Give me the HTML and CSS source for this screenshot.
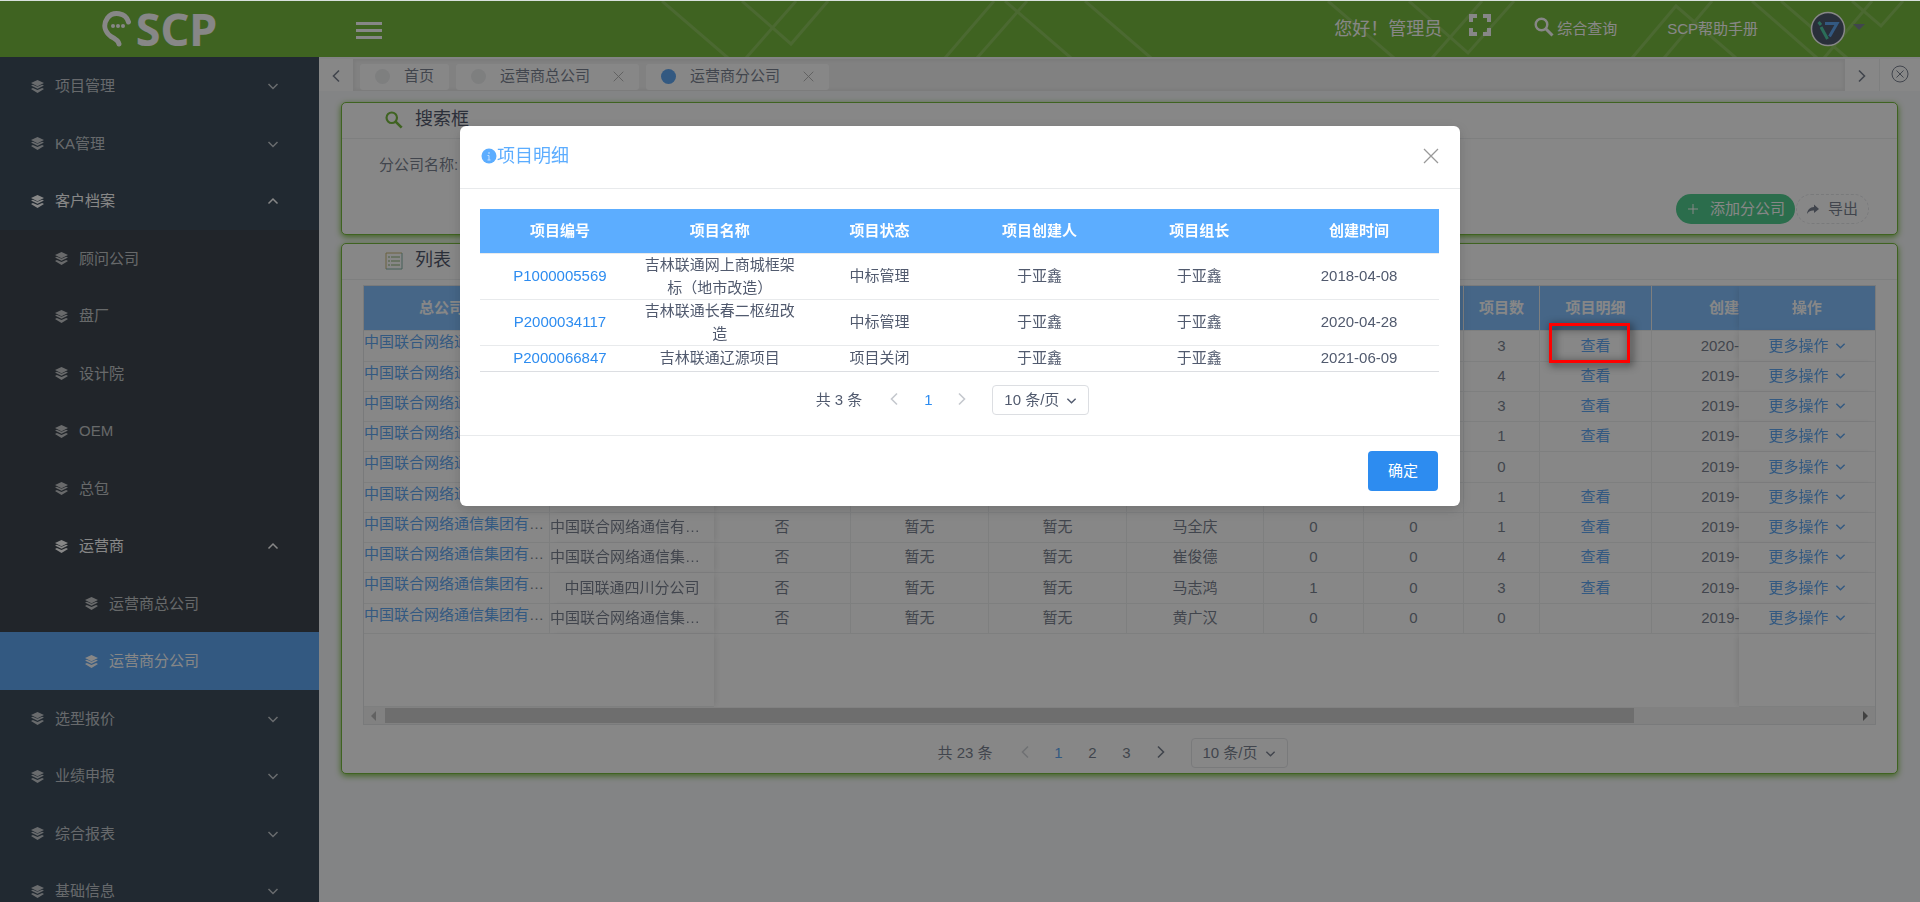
FILE: index.html
```
<!DOCTYPE html>
<html lang="zh-CN">
<head>
    <meta charset="UTF-8">
    <meta name="viewport" content="width=device-width, initial-scale=1.0">
    <title>SCP - 运营商分公司</title>
    <link rel="stylesheet" href="styles.css">
</head>
<body>
    <svg class="sprite" aria-hidden="true">
        <symbol id="i-layers" viewBox="1 1 14 14">
            <path fill="currentColor" d="M8 1l7 3.2L8 7.6 1 4.2z"/>
            <path fill="currentColor" d="M1 7l2-1 5 2.3L13 6l2 1-7 3.4z"/>
            <path fill="currentColor" d="M1 10.6l2-1 5 2.3 5-2.3 2 1L8 15z"/>
        </symbol>
        <symbol id="i-down" viewBox="0 0 12 12">
            <path fill="none" stroke="currentColor" stroke-width="1.5" d="M1.5 4L6 8.5 10.5 4"/>
        </symbol>
        <symbol id="i-up" viewBox="0 0 12 12">
            <path fill="none" stroke="currentColor" stroke-width="1.5" d="M1.5 8.5L6 4l4.500 4.500"/>
        </symbol>
        <symbol id="i-left" viewBox="0 0 12 16">
            <path fill="none" stroke="currentColor" stroke-width="1.6" d="M9 2.500L3.500 8 9 13.500"/>
        </symbol>
        <symbol id="i-right" viewBox="0 0 12 16">
            <path fill="none" stroke="currentColor" stroke-width="1.6" d="M3 2.500L8.500 8 3 13.500"/>
        </symbol>
        <symbol id="i-close" viewBox="0 0 16 16">
            <path fill="none" stroke="currentColor" stroke-width="1.300" d="M1 1l14 14M15 1L1 15"/>
        </symbol>
        <symbol id="i-search" viewBox="0 0 20 20">
            <circle cx="7.500" cy="7.500" r="5.800" fill="none" stroke="currentColor" stroke-width="2.400"/>
            <path stroke="currentColor" stroke-width="3" d="M11.500 11.500L18.500 18.500"/>
        </symbol>
    </svg>

    <div class="app">
        <header class="header">
            <svg class="header-lines" viewBox="0 0 1920 56" preserveAspectRatio="xMaxYMin slice" aria-hidden="true">
                <path d="M662 0L728 57M742 0L791 43L828 0M796 0L746 57M994 0L945 57M1027 0L977 57M1005 0L1071 57M1085 0L1151 57M1328 0L1394 57M1409 0L1468 52L1514 0M1482 0L1432 57M1632 57L1676 5L1736 57M1712 0L1664 57M1752 0L1817 57M1781 0L1847 57M1852 0L1881 25L1903 0M1872 0L1824 57"/>
            </svg>
            <a class="logo" href="#">
                <svg width="30" height="36" viewBox="0 0 30 36" aria-hidden="true">
                    <path d="M26.500 11C24 1.500 11 0 5.500 7C.5 14 3 21 9 25.500C14 28 16.500 30 17 33" fill="none" stroke="#fff" stroke-width="5" stroke-linecap="round"/>
                    <circle cx="11" cy="15" r="2" fill="#fff"/>
                    <circle cx="16" cy="15" r="2" fill="#fff"/>
                    <circle cx="21" cy="15" r="2" fill="#fff"/>
                </svg>
                <span>SCP</span>
            </a>
            <button class="burger" aria-label="折叠菜单"><i></i><i></i><i></i></button>
            <div class="header-right">
                <span class="hello">您好！管理员</span>
                <button class="full" aria-label="全屏">
                    <svg width="24" height="24" viewBox="0 0 24 24"><path fill="none" stroke="currentColor" stroke-width="4" d="M9 3H3v6M15 3h6v6M3 15v6h6M21 15v6h-6"/></svg>
                </button>
                <a class="query" href="#"><svg width="20" height="20"><use href="#i-search"/></svg>综合查询</a>
                <a class="help" href="#">SCP帮助手册</a>
                <button class="user" aria-label="用户">
                    <svg width="36" height="36" viewBox="0 0 36 36">
                        <circle cx="18" cy="18" r="16.500" fill="#142340" stroke="#fff" stroke-width="1.500"/>
                        <path d="M15 12.500h12l-7.500 13" fill="none" stroke="#2d8cf0" stroke-width="3"/>
                        <path d="M8.500 11l2.500 3M11 16l6.500 12" fill="none" stroke="#19be8b" stroke-width="3"/>
                    </svg>
                    <span class="caret"></span>
                </button>
            </div>
        </header>

        <div class="layout">
            <nav class="sider" id="sider"></nav>

            <main class="main">
                <div class="tabs">
                    <button class="tabs-btn" aria-label="向左"><svg width="14" height="16"><use href="#i-left"/></svg></button>
                    <div class="tabs-scroll">
                        <a class="tab" href="#"><i class="dot"></i>首页</a>
                        <a class="tab" href="#"><i class="dot"></i>运营商总公司<svg class="tab-x" width="11" height="11"><use href="#i-close"/></svg></a>
                        <a class="tab" href="#"><i class="dot dot-on"></i>运营商分公司<svg class="tab-x" width="11" height="11"><use href="#i-close"/></svg></a>
                    </div>
                    <button class="tabs-btn" aria-label="向右"><svg width="14" height="16"><use href="#i-right"/></svg></button>
                    <button class="tabs-btn tabs-close" aria-label="关闭标签">
                        <svg width="18" height="18" viewBox="0 0 18 18"><g fill="none" stroke="currentColor"><circle cx="9" cy="9" r="8"/><path d="M5.500 5.500l7 7M12.500 5.500l-7 7"/></g></svg>
                    </button>
                </div>

                <section class="card">
                    <h2 class="card-head"><svg class="green" width="18" height="18"><use href="#i-search"/></svg>搜索框</h2>
                    <form class="search">
                        <div class="field">
                            <label for="branch">分公司名称:</label>
                            <input id="branch" type="text">
                        </div>
                        <div class="actions">
                            <button type="button" class="pill pill-add">
                                <svg width="10" height="10" viewBox="0 0 10 10"><path stroke="currentColor" d="M5 0v10M0 5h10"/></svg>添加分公司
                            </button>
                            <button type="button" class="pill pill-out">
                                <svg width="12" height="12" viewBox="0 0 12 12"><path fill="currentColor" d="M7 1.500L12 6 7 10V7.500C4 7.300 2 8 0 11 .3 7 3 4 7 4z"/></svg>导出
                            </button>
                        </div>
                    </form>
                </section>

                <section class="card">
                    <h2 class="card-head">
                        <svg width="18" height="18" viewBox="0 0 18 18" fill="none">
                            <path d="M1 17V1h16" stroke="#b9a24a"/><path d="M17 1v16H1" stroke="#5a9a8a"/>
                            <path d="M3 5h2M3 9h2M3 13h2M6 5h9M6 9h9M6 13h9" stroke="#6a9a4a"/>
                        </svg>列表
                    </h2>
                    <div class="list">
                        <div class="grid-box">
                            <div class="grid-view">
                                <table class="grid">
                                    <colgroup>
                                        <col class="w186"><col class="w164"><col class="w137"><col class="w138"><col class="w138"><col class="w137"><col class="w100"><col class="w100"><col class="w76"><col class="w112"><col class="w175"><col class="w174"><col class="w136">
                                    </colgroup>
                                    <thead>
                                        <tr>
                                            <th class="fix-a">总公司名称</th><th class="fix-b">分公司名称</th><th>是否总部</th><th>省份</th><th>城市</th><th>负责人</th><th>联系人数</th><th>拜访数</th><th>项目数</th><th>项目明细</th><th>创建时间</th><th></th><th class="fix-r">操作</th>
                                        </tr>
                                    </thead>
                                    <tbody id="rows"></tbody>
                                </table>
                            </div>
                            <div class="scrollbar">
                                <span class="arrow arrow-l"></span>
                                <div class="track"><div class="thumb"></div></div>
                                <span class="arrow arrow-r"></span>
                            </div>
                        </div>
                        <div class="pager">
                            <span class="total">共 23 条</span>
                            <button class="off" aria-label="上一页"><svg width="14" height="16"><use href="#i-left"/></svg></button>
                            <button class="on">1</button>
                            <button>2</button>
                            <button>3</button>
                            <button aria-label="下一页"><svg width="14" height="16"><use href="#i-right"/></svg></button>
                            <span class="size">
                                <select aria-label="每页条数"><option>10 条/页</option></select>
                                <svg width="11" height="11"><use href="#i-down"/></svg>
                            </span>
                        </div>
                    </div>
                </section>
            </main>
        </div>
    </div>

    <div class="mask"></div>

    <div class="modal-wrap">
        <div class="modal" role="dialog" aria-labelledby="modalTitle">
            <div class="modal-head">
                <h3 id="modalTitle">
                    <svg width="16" height="16" viewBox="0 0 16 16"><circle cx="8" cy="8" r="7.500" fill="#5cadff"/><path d="M8 4v2M6.500 7.500H8V12M6.500 12h3" stroke="#c4e0ff" fill="none"/></svg>项目明细
                </h3>
                <button class="modal-x" aria-label="关闭"><svg width="16" height="16"><use href="#i-close"/></svg></button>
            </div>
            <div class="modal-body">
                <table class="detail">
                    <thead>
                        <tr><th>项目编号</th><th>项目名称</th><th>项目状态</th><th>项目创建人</th><th>项目组长</th><th>创建时间</th></tr>
                    </thead>
                    <tbody>
                        <tr><td><a href="#">P1000005569</a></td><td>吉林联通网上商城框架标（地市改造）</td><td>中标管理</td><td>于亚鑫</td><td>于亚鑫</td><td>2018-04-08</td></tr>
                        <tr><td><a href="#">P2000034117</a></td><td>吉林联通长春二枢纽改造</td><td>中标管理</td><td>于亚鑫</td><td>于亚鑫</td><td>2020-04-28</td></tr>
                        <tr><td><a href="#">P2000066847</a></td><td>吉林联通辽源项目</td><td>项目关闭</td><td>于亚鑫</td><td>于亚鑫</td><td>2021-06-09</td></tr>
                    </tbody>
                </table>
                <div class="pager">
                    <span class="total">共 3 条</span>
                    <button class="off" aria-label="上一页"><svg width="14" height="16"><use href="#i-left"/></svg></button>
                    <button class="on">1</button>
                    <button class="off" aria-label="下一页"><svg width="14" height="16"><use href="#i-right"/></svg></button>
                    <span class="size">
                        <select aria-label="每页条数"><option>10 条/页</option></select>
                        <svg width="11" height="11"><use href="#i-down"/></svg>
                    </span>
                </div>
            </div>
            <div class="modal-foot"><button class="ok">确定</button></div>
        </div>
    </div>

    <div class="highlight"></div>

    <script>
        // [level, title, arrow, state]
        const menu = [
            [1, '项目管理', 'down', ''],
            [1, 'KA管理', 'down', ''],
            [1, '客户档案', 'up', 'open'],
            [2, '顾问公司', '', ''],
            [2, '盘厂', '', ''],
            [2, '设计院', '', ''],
            [2, 'OEM', '', ''],
            [2, '总包', '', ''],
            [2, '运营商', 'up', 'open'],
            [3, '运营商总公司', '', ''],
            [3, '运营商分公司', '', 'active'],
            [1, '选型报价', 'down', ''],
            [1, '业绩申报', 'down', ''],
            [1, '综合报表', 'down', ''],
            [1, '基础信息', 'down', '']
        ];

        document.getElementById('sider').innerHTML = menu.map(([level, title, arrow, state]) => `
            <a class="item level-${level} ${state}" href="#">
                <svg width="13" height="13"><use href="#i-layers"/></svg>
                <span>${title}</span>
                ${arrow ? `<svg class="item-arrow" width="12" height="12"><use href="#i-${arrow}"/></svg>` : ''}
            </a>
        `).join('');

        const group = '中国联合网络通信集团有限公司';
        // [branch, owner, contacts, visits, projects, created]
        const rows = [
            ['中国联合网络通信有限公司', '于亚鑫', 0, 0, 3, '2020-04-08'],
            ['中国联合网络通信有限公司', '马全庆', 0, 0, 4, '2019-11-20'],
            ['中国联合网络通信有限公司', '马全庆', 0, 0, 3, '2019-11-20'],
            ['中国联合网络通信有限公司', '马全庆', 0, 0, 1, '2019-11-20'],
            ['中国联合网络通信有限公司', '马全庆', 0, 0, 0, '2019-11-20'],
            ['中国联合网络通信有限公司', '马全庆', 0, 0, 1, '2019-11-20'],
            ['中国联合网络通信有限公司', '马全庆', 0, 0, 1, '2019-11-20'],
            ['中国联合网络通信集团有限公司', '崔俊德', 0, 0, 4, '2019-11-20'],
            ['中国联通四川分公司', '马志鸿', 1, 0, 3, '2019-11-20'],
            ['中国联合网络通信集团有限公司', '黄广汉', 0, 0, 0, '2019-11-20']
        ];

        document.getElementById('rows').innerHTML = rows.map(([branch, owner, contacts, visits, projects, created]) => `
            <tr>
                <td class="fix-a"><a href="#">${group}</a></td>
                <td class="fix-b">${branch}</td>
                <td>否</td><td>暂无</td><td>暂无</td>
                <td>${owner}</td><td>${contacts}</td><td>${visits}</td><td>${projects}</td>
                <td>${projects ? '<a href="#">查看</a>' : ''}</td>
                <td>${created}</td><td></td>
                <td class="fix-r"><a href="#">更多操作 <svg width="11" height="11"><use href="#i-down"/></svg></a></td>
            </tr>
        `).join('') + `
            <tr class="filler"><td class="fix-a"></td><td class="fix-b"></td><td colspan="10"></td><td class="fix-r"></td></tr>
        `;
    </script>
</body>
</html>
```
FILE: styles.css
```
:root {
    --green: #4da500;
    --blue: #2d8cf0;
    --head: #5cadff;
    --text: #515a6e;
    --line: #e8eaec;
}

* {
    box-sizing: border-box;
    margin: 0;
    padding: 0;
}

body {
    font-family: "Liberation Sans", "Noto Sans CJK SC", sans-serif;
    font-size: 15px;
    line-height: 1.5;
    color: var(--text);
    background: #f5f7f9;
    overflow: hidden;
}

a {
    color: var(--blue);
    text-decoration: none;
}

button,
input,
select {
    font: inherit;
    color: inherit;
    background: none;
    border: none;
}

svg {
    flex: none;
}

.sprite {
    position: absolute;
    width: 0;
    height: 0;
}

.app {
    height: 100vh;
    display: flex;
    flex-direction: column;
    border-top: 1px solid #d8e0dc;
}

/* header */
.header {
    position: relative;
    flex: none;
    height: 56px;
    display: flex;
    align-items: center;
    background: var(--green);
    color: #fff;
}

.header a {
    color: #fff;
}

.header-lines {
    position: absolute;
    top: 0;
    left: 0;
    width: 100%;
    height: 100%;
}

.header-lines path {
    fill: none;
    stroke: rgba(255, 255, 255, 0.16);
    stroke-width: 3;
}

.header > :not(.header-lines) {
    position: relative;
}

.logo {
    width: 319px;
    display: flex;
    align-items: center;
    justify-content: center;
    gap: 4px;
    font-family: "Noto Sans", sans-serif;
    font-size: 45px;
    font-weight: 700;
    line-height: 56px;
}

.burger {
    display: flex;
    flex-direction: column;
    gap: 4px;
    margin: 2px 0 0 37px;
}

.burger i {
    width: 26px;
    height: 3px;
    background: #fff;
}

.header-right {
    margin-left: auto;
    display: flex;
    align-items: center;
    padding-right: 55px;
}

.hello {
    font-size: 18px;
}

.full {
    display: flex;
    margin: 0 42px 8px 26px;
}

.query {
    display: flex;
    align-items: center;
    gap: 3px;
}

.query svg {
    margin-bottom: 4px;
}

.help {
    margin: 0 52px 0 50px;
}

.user {
    display: flex;
    align-items: center;
    gap: 7px;
}

.caret {
    border: 6px solid transparent;
    border-top-color: var(--text);
    border-bottom: none;
    margin-bottom: 4px;
}

/* layout */
.layout {
    flex: 1;
    min-height: 0;
    display: flex;
}

.sider {
    flex: none;
    width: 319px;
    background: #001529;
    overflow: hidden;
}

.item {
    display: flex;
    align-items: center;
    gap: 11px;
    padding: 18px 40px 17px 31px;
    color: rgba(255, 255, 255, 0.7);
}

.level-2,
.level-3 {
    background: #000c17;
}

.level-2 {
    padding-left: 55px;
}

.level-3 {
    padding-left: 85px;
}

.open {
    color: #fff;
}

.active {
    background: var(--blue);
    color: #fff;
}

.item-arrow {
    margin-left: auto;
}

.main {
    flex: 1;
    min-width: 0;
}

/* opened pages */
.tabs {
    display: flex;
    height: 34px;
    background: #fff;
    border-top: 2px solid #f5f7f9;
}

.tabs-btn {
    width: 34px;
    padding-top: 8px;
    background: #fff;
}

.tabs-close {
    width: 41px;
    padding-top: 4px;
    border-left: 1px solid var(--line);
}

.tabs-scroll {
    flex: 1;
    display: flex;
    align-items: center;
    gap: 7px;
    padding: 3px 7px 0;
    background: #f0f0f0;
    box-shadow: inset 0 0 3px 2px rgba(100, 100, 100, 0.1);
}

.tab {
    height: 26px;
    display: flex;
    align-items: center;
    padding: 0 15px;
    border-radius: 3px;
    background: #fff;
    color: var(--text);
}

.dot {
    width: 15px;
    height: 15px;
    margin-right: 14px;
    border-radius: 50%;
    background: #e8eaec;
}

.dot-on {
    background: var(--blue);
}

.tab-x {
    margin-left: 23px;
    color: #999;
}

/* cards */
.card {
    margin: 11px 22px 0;
    border: 1px solid var(--green);
    border-radius: 5px;
    background: #fff;
    box-shadow: 0 2px 6px var(--green);
}

.card + .card {
    margin-top: 8px;
}

.card-head {
    height: 36px;
    display: flex;
    align-items: center;
    gap: 12px;
    padding: 0 43px 2px;
    border-bottom: 1px solid var(--line);
    font-size: 18px;
    font-weight: 400;
    color: #17233d;
}

.green {
    color: var(--green);
}

.search {
    padding: 9px 28px 10px 37px;
}

.field {
    display: flex;
    align-items: center;
    gap: 12px;
}

.field input {
    width: 200px;
    height: 34px;
    padding: 0 8px;
    border: 1px solid #dcdee2;
    border-radius: 4px;
}

.actions {
    display: flex;
    justify-content: flex-end;
    gap: 1px;
    margin-top: 12px;
}

.pill {
    height: 30px;
    display: flex;
    align-items: center;
    gap: 12px;
    padding: 0 10px;
    border-radius: 15px;
}

.pill-add {
    padding: 0 10px 0 12px;
    background: #19be6b;
    color: #fff;
}

.pill-out {
    gap: 9px;
    border: 1px dashed #dcdee2;
}

.list {
    padding: 5px 21px;
}

/* company table */
.grid-box {
    border: 1px solid #dcdee2;
}

.grid-view {
    overflow: hidden;
}

.grid {
    width: 1773px;
    table-layout: fixed;
    border-collapse: separate;
    border-spacing: 0;
    text-align: center;
}

.w76 { width: 76px; }
.w100 { width: 100px; }
.w112 { width: 112px; }
.w136 { width: 136px; }
.w137 { width: 137px; }
.w138 { width: 138px; }
.w164 { width: 164px; }
.w174 { width: 174px; }
.w175 { width: 175px; }
.w186 { width: 186px; }

.grid th,
.grid td {
    border-right: 1px solid var(--line);
    border-bottom: 1px solid var(--line);
    white-space: nowrap;
    overflow: hidden;
    text-overflow: ellipsis;
}

.grid th {
    height: 45px;
    background: var(--head);
    color: #fff;
}

.grid td {
    height: 30px;
    background: #fff;
}

.grid tr:nth-child(4n + 1) td {
    height: 31px;
}

.grid .fix-a,
.grid .fix-b,
.grid .fix-r {
    position: sticky;
    z-index: 1;
}

.grid .fix-a {
    left: 0;
}

.grid td.fix-a {
    vertical-align: top;
}

.grid .fix-b {
    left: 186px;
    border-right: none;
    box-shadow: 3px 0 6px -2px rgba(0, 0, 0, 0.15);
}

.grid .fix-r {
    right: 0;
    border-right: none;
    box-shadow: -3px 0 6px -2px rgba(0, 0, 0, 0.15);
}

.fix-r svg {
    margin-left: 2px;
}

.grid .filler td {
    height: 73px;
    border-right: none;
}

.grid .filler td[colspan] {
    border-bottom: none;
}

.scrollbar {
    height: 17px;
    display: flex;
    align-items: center;
    padding: 0 7px;
    background: #f1f1f1;
}

.arrow {
    border: 5px solid transparent;
}

.arrow-l {
    border-left: none;
    border-right-color: #a3a3a3;
}

.arrow-r {
    border-right: none;
    border-left-color: #505050;
}

.track {
    flex: 1;
    margin: 0 9px;
}

.thumb {
    width: 85%;
    height: 15px;
    background: #c1c1c1;
}

/* pagination */
.pager {
    display: flex;
    justify-content: center;
    align-items: center;
    margin-top: 13px;
    padding-right: 14px;
}

.total {
    margin-right: 17px;
}

.pager button {
    min-width: 30px;
    height: 30px;
    margin-right: 4px;
}

.pager button svg {
    vertical-align: middle;
    margin-bottom: 3px;
}

.pager .on {
    color: var(--blue);
}

.pager .off {
    color: #c5c8ce;
}

.size {
    position: relative;
    margin-left: 11px;
}

.size select {
    display: block;
    width: 97px;
    height: 30px;
    padding: 0 11px;
    border: 1px solid #dcdee2;
    border-radius: 4px;
    appearance: none;
}

.size svg {
    position: absolute;
    right: 12px;
    top: 10px;
    pointer-events: none;
}

/* modal */
.mask {
    position: fixed;
    inset: 1px 0 0;
    z-index: 10;
    background: rgba(55, 55, 55, 0.6);
}

.modal-wrap {
    position: fixed;
    inset: 0;
    z-index: 11;
    padding-top: 126px;
}

.modal {
    width: 1000px;
    max-width: 100%;
    margin: 0 auto;
    border-radius: 6px;
    background: #fff;
    box-shadow: 0 4px 12px rgba(0, 0, 0, 0.15);
}

.modal-head {
    height: 63px;
    display: flex;
    align-items: center;
    justify-content: space-between;
    padding: 0 21px 2px;
    border-bottom: 1px solid var(--line);
}

.modal-head h3 {
    display: flex;
    align-items: center;
    font-size: 18px;
    font-weight: 400;
    color: var(--head);
}

.modal-x {
    display: flex;
    color: #999;
}

.modal-body {
    padding: 20px 21px 20px 20px;
}

.detail {
    width: 100%;
    table-layout: fixed;
    border-collapse: separate;
    border-spacing: 0;
    border-bottom: 1px solid #dcdee2;
    text-align: center;
}

.detail th {
    height: 45px;
    background: var(--head);
    color: #fff;
    border-bottom: 1px solid var(--line);
}

.detail td {
    height: 25px;
    padding: 0 4px;
    border-bottom: 1px solid var(--line);
}

.detail tr:last-child td {
    border-bottom: none;
}

.modal-foot {
    display: flex;
    justify-content: flex-end;
    padding: 15px 22px;
    border-top: 1px solid var(--line);
}

.ok {
    width: 70px;
    height: 40px;
    border-radius: 4px;
    background: var(--blue);
    color: #fff;
}

/* marker over the first detail link */
.highlight {
    position: absolute;
    z-index: 12;
    left: 1549px;
    top: 323px;
    width: 81px;
    height: 40px;
    border: 3px solid #f00;
    filter: drop-shadow(2px 2px 4px rgba(0, 0, 0, 0.8));
}
```
